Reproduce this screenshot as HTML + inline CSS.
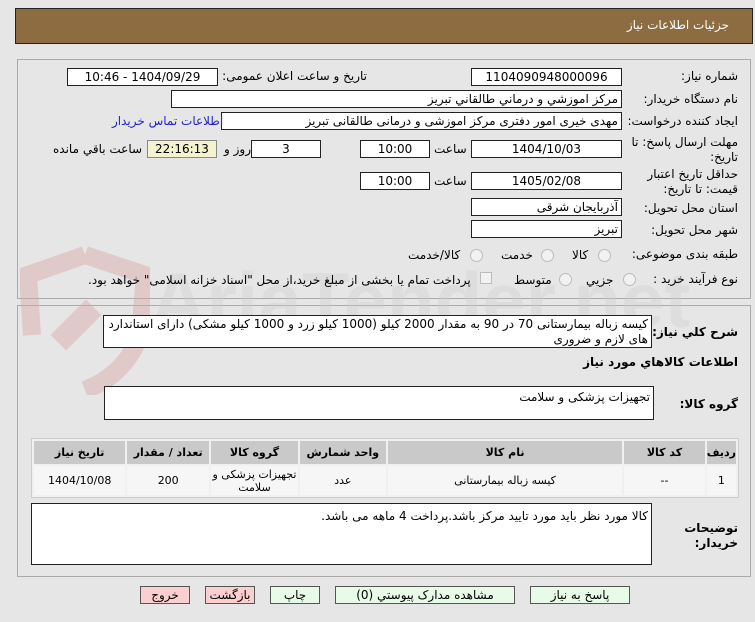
<!DOCTYPE html>
<html><head><meta charset="utf-8"><style>
*{margin:0;padding:0;box-sizing:border-box}
body{width:755px;height:622px;background:#e6e6e6;font-family:"DejaVu Sans","Liberation Sans",sans-serif;font-size:12px;color:#000;position:relative;overflow:hidden;direction:rtl}
.a{position:absolute;white-space:nowrap}
.box{position:absolute;background:#fff;border:1px solid #222;height:18px;line-height:16px;padding:0 3px;font-size:12px;white-space:nowrap;overflow:hidden}
.c{text-align:center}
.l{text-align:right}
.r{position:absolute;width:13px;height:13px;border-radius:50%;border:1px solid #bbb;background:#f2f2f2}
.b{font-weight:bold}
.btn{position:absolute;height:18px;line-height:16px;border:1px solid #555;text-align:center;font-size:12px}
table{position:absolute;border-collapse:separate;border-spacing:2px;background:#f0f0f0;border:1px solid #ccc;font-size:11px;direction:ltr}
td{text-align:center;direction:rtl}
</style></head><body>
<div class="a" style="left:15px;top:8px;width:738px;height:36px;background:#8c6c40;border:1px solid #222"></div>
<div class="a" style="right:26px;top:18px;color:#fff;font-size:12px">جزئیات اطلاعات نیاز</div>

<div class="a" style="left:17px;top:59px;width:734px;height:240px;border:1px solid #aaa;background:#e6e6e6"></div>
<div class="a" style="left:17px;top:305px;width:734px;height:272px;border:1px solid #aaa;background:#e6e6e6"></div>

<!-- watermark -->
<svg class="a" style="left:20px;top:245px;opacity:.45" width="130" height="150" viewBox="0 0 130 150"><path d="M65 10 L125 30 L120 90 Q105 130 65 145 M65 10 L8 30 L12 90" fill="none" stroke="#d8a8a8" stroke-width="18"/><rect x="45" y="55" width="22" height="50" fill="#d8a8a8" transform="rotate(45 56 80)"/></svg>
<div class="a" style="left:150px;top:255px;font-size:78px;font-weight:bold;color:#cfcfcf;opacity:.35;direction:ltr;font-family:'Liberation Sans',sans-serif">AriaTender.net</div>

<div class="a" style="right:17px;top:69px">شماره نیاز:</div>
<div class="box c" style="left:471px;top:68px;width:151px">1104090948000096</div>
<div class="a" style="right:388px;top:69px">تاریخ و ساعت اعلان عمومی:</div>
<div class="box c" style="left:67px;top:68px;width:151px">1404/09/29 - 10:46</div>

<div class="a" style="right:17px;top:92px">نام دستگاه خریدار:</div>
<div class="box l" style="left:171px;top:90px;width:451px">مرکز اموزشي و درماني طالقاني تبريز</div>

<div class="a" style="right:17px;top:114px">ایجاد کننده درخواست:</div>
<div class="box l" style="left:221px;top:112px;width:401px">مهدی خیری امور دفتری مرکز اموزشی و درمانی طالقانی تبریز</div>
<div class="a" style="left:112px;top:114px;color:#2222cc">اطلاعات تماس خریدار</div>

<div class="a" style="right:17px;top:135px;line-height:15px;text-align:right">مهلت ارسال پاسخ: تا<br>تاریخ:</div>
<div class="box c" style="left:471px;top:140px;width:151px">1404/10/03</div>
<div class="a" style="left:434px;top:142px">ساعت</div>
<div class="box c" style="left:360px;top:140px;width:70px">10:00</div>
<div class="box c" style="left:251px;top:140px;width:70px">3</div>
<div class="a" style="left:224px;top:142px">روز و</div>
<div class="box c" style="left:147px;top:140px;width:70px;background:#f5f2cf;border-color:#888">22:16:13</div>
<div class="a" style="left:53px;top:142px">ساعت باقي مانده</div>

<div class="a" style="right:17px;top:167px;line-height:15px;text-align:right">حداقل تاریخ اعتبار<br>قیمت: تا تاریخ:</div>
<div class="box c" style="left:471px;top:172px;width:151px">1405/02/08</div>
<div class="a" style="left:434px;top:174px">ساعت</div>
<div class="box c" style="left:360px;top:172px;width:70px">10:00</div>

<div class="a" style="right:17px;top:201px">استان محل تحویل:</div>
<div class="box l" style="left:471px;top:198px;width:151px">آذربایجان شرقی</div>
<div class="a" style="right:17px;top:223px">شهر محل تحویل:</div>
<div class="box l" style="left:471px;top:220px;width:151px">تبریز</div>

<div class="a" style="right:17px;top:247px">طبقه بندی موضوعی:</div>
<div class="r" style="left:598px;top:249px"></div><div class="a" style="left:572px;top:248px">کالا</div>
<div class="r" style="left:541px;top:249px"></div><div class="a" style="left:501px;top:248px">خدمت</div>
<div class="r" style="left:470px;top:249px"></div><div class="a" style="left:408px;top:248px">کالا/خدمت</div>

<div class="a" style="right:17px;top:272px">نوع فرآیند خرید :</div>
<div class="r" style="left:623px;top:273px"></div><div class="a" style="left:586px;top:273px">جزیي</div>
<div class="r" style="left:559px;top:273px"></div><div class="a" style="left:514px;top:273px">متوسط</div>
<div class="a" style="left:480px;top:272px;width:12px;height:12px;border:1px solid #bbb;background:#f2f2f2"></div>
<div class="a" style="left:88px;top:273px">پرداخت تمام یا بخشی از مبلغ خرید،از محل "اسناد خزانه اسلامی" خواهد بود.</div>

<div class="a b" style="right:17px;top:325px">شرح کلي نیاز:</div>
<div class="box" style="left:103px;top:315px;width:549px;height:33px;line-height:15px;white-space:normal;padding-top:1px">کیسه زباله بیمارستانی 70 در 90 به مقدار 2000 کیلو (1000 کیلو زرد و 1000 کیلو مشکی) دارای استاندارد های لازم و ضروری</div>
<div class="a b" style="right:17px;top:355px">اطلاعات کالاهاي مورد نياز</div>
<div class="a b" style="right:17px;top:397px">گروه کالا:</div>
<div class="box" style="left:104px;top:386px;width:550px;height:34px;padding-top:2px">تجهیزات پزشکی و سلامت</div>

<table style="left:31px;top:438px;width:708px;height:60px">
<tr style="height:23px;background:#c9c9c9;font-weight:bold">
<td style="width:92px">تاریخ نیاز</td><td style="width:83px">تعداد / مقدار</td><td style="width:88px">گروه کالا</td><td style="width:87px">واحد شمارش</td><td style="width:239px">نام کالا</td><td style="width:82px">کد کالا</td><td>ردیف</td></tr>
<tr style="background:#f6f6f6">
<td>1404/10/08</td><td>200</td><td style="line-height:13px">تجهیزات پزشکی و<br>سلامت</td><td>عدد</td><td>کیسه زباله بیمارستانی</td><td>--</td><td>1</td></tr>
</table>

<div class="a b" style="right:17px;top:521px;line-height:15px;text-align:right">توضیحات<br>خریدار:</div>
<div class="box" style="left:31px;top:503px;width:621px;height:62px;padding-top:4px">کالا مورد نظر باید مورد تایید مرکز باشد.پرداخت 4 ماهه می باشد.</div>

<div class="btn" style="left:530px;top:586px;width:100px;background:#e8fbe8">پاسخ به نیاز</div>
<div class="btn" style="left:335px;top:586px;width:180px;background:#e8fbe8">مشاهده مدارک پیوستي (0)</div>
<div class="btn" style="left:270px;top:586px;width:50px;background:#e8fbe8">چاپ</div>
<div class="btn" style="left:205px;top:586px;width:50px;background:#fbcfcf">بازگشت</div>
<div class="btn" style="left:140px;top:586px;width:50px;background:#fbcfcf">خروج</div>
</body></html>
